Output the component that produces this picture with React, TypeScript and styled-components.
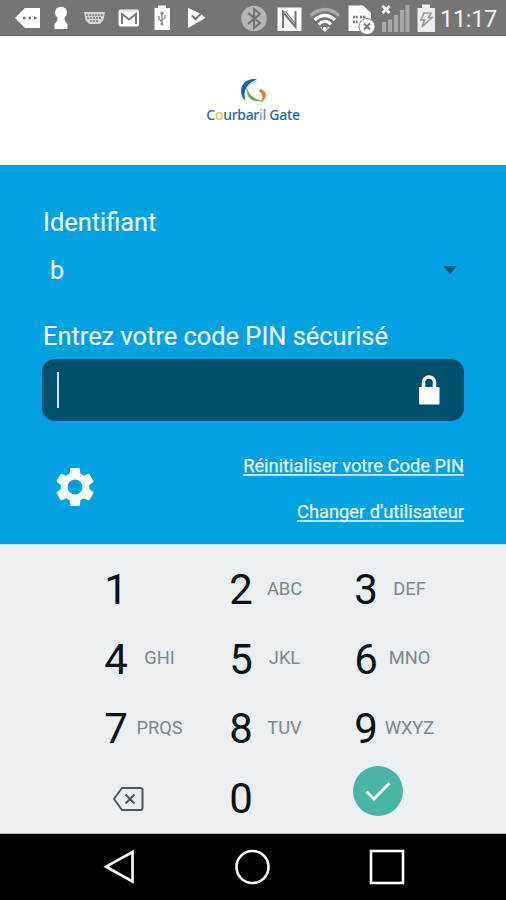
import React from "react";
import styled, { createGlobalStyle } from "styled-components";

const GlobalStyle = createGlobalStyle`
  * { box-sizing: border-box; }
  body { margin: 0; background: #000; font-family: Roboto, "Liberation Sans", sans-serif; }
  svg { display: block; flex: none; }
`;

const Screen = styled.main`
  width: 506px;
  height: 900px;
  display: flex;
  flex-direction: column;
  overflow: hidden;
`;

const StatusBar = styled.header`
  height: 36px;
  flex: none;
  display: flex;
  background: #757575;
  border-bottom: 1px solid #686868;
  color: #f4f4f4;
`;

const StatusSvg = styled.svg<{ $gap: number }>`
  height: 35px;
  margin-left: ${(p) => p.$gap}px;
`;

const Clock = styled.time`
  margin-left: 5px;
  font-size: 23.5px;
  line-height: 38px;
  letter-spacing: -0.3px;
  white-space: nowrap;
`;

const Brand = styled.section`
  height: 129px;
  flex: none;
  background: #fff;
  display: flex;
  flex-direction: column;
  align-items: center;
  padding-top: 42px;
`;

const BrandName = styled.div`
  display: flex;
  font: 500 14px/20px "Noto Sans", sans-serif;
  color: #2168a9;
  letter-spacing: -0.3px;
  white-space: pre;
`;

const BrandLetter = styled.span<{ $color: string }>`
  color: ${(p) => p.$color};
`;

const Login = styled.section`
  height: 379px;
  flex: none;
  background: #00a1e1;
  border-top: 1px solid #1296cd;
  padding: 41px 42px 0 42px;
  display: flex;
  flex-direction: column;
  color: #e9f9ff;
`;

const Label = styled.label`
  margin-left: 1px;
  font-size: 25.4px;
  line-height: 30px;
  -webkit-text-stroke: 0.2px currentColor;
  white-space: nowrap;
`;

const UserSelect = styled.div`
  height: 50px;
  margin: 8px 7px 0 8px;
  display: flex;
  align-items: center;
  justify-content: space-between;
  font-size: 25px;
  -webkit-text-stroke: 0.2px currentColor;
`;

const PinLabel = styled(Label)`
  margin-top: 26px;
`;

const PinField = styled.div`
  height: 62px;
  margin-top: 8px;
  padding: 0 24px 0 15px;
  border-radius: 13px;
  background: #00506d;
  display: flex;
  align-items: center;
  justify-content: space-between;
`;

const Caret = styled.span`
  width: 2px;
  height: 36px;
  background: #d7e6f5;
`;

const Actions = styled.div`
  display: flex;
  justify-content: space-between;
  margin: 33px 0 0 14px;
`;

const GearIcon = styled.svg`
  margin-top: 13px;
`;

const Links = styled.nav`
  display: flex;
  flex-direction: column;
  align-items: flex-end;
  gap: 22px;
`;

const TextLink = styled.a`
  font-size: 18.3px;
  line-height: 24px;
  -webkit-text-stroke: 0.25px currentColor;
  text-decoration: underline;
  text-decoration-color: #b5e2f6;
  text-decoration-skip-ink: none;
  text-decoration-thickness: 2px;
  text-underline-offset: 2px;
  white-space: nowrap;
`;

const Keypad = styled.section`
  height: 290px;
  flex: none;
  background: #eceff1;
  border-top: 1px solid #c5dfea;
  border-bottom: 1px solid #b9bbbb;
  padding: 10px 0 0 104px;
  display: grid;
  grid-template-columns: 125px 125px 125px;
  grid-template-rows: 70px 69px 70px 70px;
`;

const Key = styled.button`
  border: 0;
  padding: 0;
  background: none;
  display: flex;
  align-items: center;
  font-family: inherit;
  color: #071116;
`;

const Digit = styled.span`
  width: 24px;
  font-size: 42px;
  line-height: 70px;
`;

const Letters = styled.span`
  width: 63px;
  text-align: center;
  font-size: 18.3px;
  line-height: 24px;
  margin-bottom: 3px;
  color: #7c868b;
`;

const ConfirmButton = styled(Key)`
  width: 50px;
  height: 50px;
  margin: 2px 0 0 -1px;
  border-radius: 50%;
  background: #4ab5a7;
  justify-content: center;
`;

const NavBar = styled.footer`
  height: 66px;
  flex: none;
  background: #000;
  display: flex;
  align-items: center;
  padding: 0 101px 0 103px;
  justify-content: space-between;
`;

type StatusIconProps = { x: number; w: number; gap: number; children: React.ReactNode };

const StatusIcon = ({ x, w, gap, children }: StatusIconProps) => (
  <StatusSvg $gap={gap} width={w} height={35} viewBox={`${x} 0 ${w} 35`} fill="none">
    {children}
  </StatusSvg>
);

const keys = [
  ["1", ""], ["2", "ABC"], ["3", "DEF"],
  ["4", "GHI"], ["5", "JKL"], ["6", "MNO"],
  ["7", "PRQS"], ["8", "TUV"], ["9", "WXYZ"],
];

const SystemStatus = () => (
  <StatusBar>
    <StatusIcon x={15} w={25} gap={15}>
      <path d="M15 18 25 8H40V28H25Z" fill="#fff" />
      <path d="M23 18h2.5M28.500 18H31M34 18h2.500" stroke="#777" strokeWidth="2.300" />
    </StatusIcon>
    <StatusIcon x={54} w={14} gap={14}>
      <path d="M57.500 17.500A6 6 0 1 1 64.500 17.500C64.500 21 65.500 22 67.500 24V29H54.500V24C56.500 22 57.500 21 57.500 17.500Z" fill="#fff" />
    </StatusIcon>
    <StatusIcon x={84} w={21} gap={16}>
      <path d="M84 12H105L103.500 20 100 24H89L85.500 20Z" fill="#d4d4d4" />
      <path d="M86 15H104M87 18H102M90 21H99" stroke="#777" strokeWidth="1.300" strokeDasharray="2 1" />
    </StatusIcon>
    <StatusIcon x={118} w={22} gap={13}>
      <rect x="118.500" y="9.500" width="20.500" height="17" rx="2" fill="#fff" />
      <path d="M122 24V14L129 19.500 136 14V24" stroke="#777" strokeWidth="2" />
      <path d="M120 11H138" stroke="#bbb" strokeWidth=".7" />
    </StatusIcon>
    <StatusIcon x={154} w={17} gap={14}>
      <path d="M154.500 8H158V5.500H166V8H170V30H154.500Z" fill="#fff" />
      <path d="M162 12V25M159 16V19L162 22M165 15V18L162 20M160.500 14 162 12 163.500 14" stroke="#888" strokeWidth="1.300" />
      <circle cx="162" cy="24" r="1.500" fill="#888" />
    </StatusIcon>
    <StatusIcon x={187} w={19} gap={16}>
      <path d="M188 8V28L205.500 18 201.500 14.500 195.500 20.500 191 16 192.500 14.500 195.500 17.500 199.500 13.500Z" fill="#fff" />
      <path d="M188 8 199.500 13.500 195.500 17.500 192.500 14.500 191 16 188 18Z" fill="#fff" />
    </StatusIcon>
    <StatusIcon x={241} w={27} gap={35}>
      <circle cx="254" cy="18.500" r="12.800" fill="#b5b5b5" />
      <path d="M248 13 260 23 254 28V9L260 14 248 24" stroke="#717171" strokeWidth="2" />
    </StatusIcon>
    <StatusIcon x={277} w={25} gap={9}>
      <rect x="277.500" y="7.500" width="24" height="23.500" fill="#fff" />
      <path d="M283 28V12L295.500 27V11" stroke="#777" strokeWidth="2" />
      <path d="M282 12H286L295.500 24" stroke="#777" strokeWidth="1.200" />
    </StatusIcon>
    <StatusIcon x={309} w={32} gap={7}>
      <path d="M310.500 15.500Q325 3.500 339 15.500" stroke="#ababab" strokeWidth="3.200" />
      <path d="M314.500 20Q325 11 335 20" stroke="#fff" strokeWidth="3.200" />
      <path d="M318.500 24.500Q325 18 331 24.500" stroke="#fff" strokeWidth="3" />
      <path d="M320 27H330L325 32Z" fill="#fff" />
      <path d="M322.500 24V29M327 24V29" stroke="#777" strokeWidth="1" />
    </StatusIcon>
    <StatusIcon x={348} w={27} gap={7}>
      <path d="M348.500 5.500H363L371 13V31H348.500Z" fill="#fff" />
      <path d="M353 17H358M360 17H366M353 22H358M360 22H366" stroke="#777" strokeWidth="2.500" strokeDasharray="2 .8" />
      <circle cx="367" cy="26.500" r="8" fill="#fff" stroke="#818181" />
      <path d="M364 23.500 370 29.500M370 23.500 364 29.500" stroke="#777" strokeWidth="2" />
    </StatusIcon>
    <StatusIcon x={381} w={29} gap={6}>
      <path d="M384 32V22M390 32V19.500M396 32V15M402 32V10M407.500 32V5" stroke="#a7a7a7" strokeWidth="4.200" />
      <path d="M382.500 6 389.500 13M389.500 6 382.500 13" stroke="#fff" strokeWidth="2.500" />
    </StatusIcon>
    <StatusIcon x={417} w={18} gap={7}>
      <path d="M417.500 8H422V4.500H430V8H435V32H417.500Z" fill="#eee" />
      <path d="M424 13H431L428.500 17.500H432L422 27 424.500 20H421Z" stroke="#999" strokeWidth="1.700" />
    </StatusIcon>
    <Clock>11:17</Clock>
  </StatusBar>
);

export default function App() {
  return (
    <>
      <GlobalStyle />
      <Screen>
        <SystemStatus />
        <Brand>
          <svg width="27" height="27" viewBox="240 78 27 27" fill="none">
            <path d="M257 79.300C248 77.500 241 83.500 241 91C241 95.500 242.800 98.500 245.500 100.500C243 93 245 84 257 79.300Z" fill="#1464ae" />
            <path d="M257 81.500C251 82.500 247 86 246 90.500" stroke="#9ccbe6" strokeWidth="1" />
            <path d="M247.200 89.500C246.500 97.500 252.500 102.500 260.500 100.500C254 99 249.500 95.500 247.200 89.500Z" fill="#66ae38" stroke="#66ae38" strokeWidth=".5" />
            <path d="M260 89.500C267 90 268 98.500 260.500 102.300C263.500 98.500 263.500 93.500 259.500 91.800Z" fill="#ef7c24" stroke="#ef7c24" strokeWidth=".5" />
          </svg>
          <BrandName>
            <span>C</span><BrandLetter $color="#e3c342">o</BrandLetter><span>urbar</span>
            <BrandLetter $color="#8fa9c0">i</BrandLetter><BrandLetter $color="#6688a8">l</BrandLetter><span> Gate</span>
          </BrandName>
        </Brand>
        <Login>
          <Label>Identifiant</Label>
          <UserSelect>
            <span>b</span>
            <svg width="14" height="8" viewBox="0 0 14 8"><path d="M0 0H14L7 8Z" fill="#075675" /></svg>
          </UserSelect>
          <PinLabel>Entrez votre code PIN sécurisé</PinLabel>
          <PinField>
            <Caret />
            <svg width="22" height="30" viewBox="0 0 22 30">
              <path d="M5.500 13V7.500A5.500 5.500 0 0 1 16.500 7.500V13" fill="none" stroke="#fff" strokeWidth="3.500" />
              <rect x="1" y="12" width="20.500" height="17.500" rx="1" fill="#fff" />
            </svg>
          </PinField>
          <Actions>
            <GearIcon width="38" height="40" viewBox="2 1.600 20 20.800">
              <path fill="#fff" d="M19.430 12.980c.04-.32.07-.64.07-.98s-.03-.66-.07-.98l2.110-1.650a.5.5 0 0 0 .12-.64l-2-3.460a.5.5 0 0 0-.61-.22l-2.490 1a7.300 7.300 0 0 0-1.690-.98l-.38-2.650A.5.5 0 0 0 14 2h-4a.5.5 0 0 0-.49.420l-.38 2.650c-.61.25-1.170.59-1.690.98l-2.490-1a.5.5 0 0 0-.61.220l-2 3.460a.5.5 0 0 0 .12.640l2.110 1.650a8 8 0 0 0 0 1.960l-2.110 1.650a.5.5 0 0 0-.12.640l2 3.460c.12.220.39.300.61.220l2.490-1c.52.400 1.080.730 1.690.980l.38 2.650c.03.240.24.420.49.420h4c.25 0 .46-.18.490-.42l.38-2.650c.61-.25 1.170-.59 1.690-.98l2.490 1c.23.090.49 0 .61-.22l2-3.460a.5.5 0 0 0-.12-.64zM12 15.900a3.900 3.900 0 1 1 0-7.800 3.900 3.900 0 0 1 0 7.800Z" />
            </GearIcon>
            <Links>
              <TextLink>Réinitialiser votre Code PIN</TextLink>
              <TextLink>Changer d'utilisateur</TextLink>
            </Links>
          </Actions>
        </Login>
        <Keypad>
          {keys.map(([digit, letters]) => (
            <Key key={digit}><Digit>{digit}</Digit><Letters>{letters}</Letters></Key>
          ))}
          <Key aria-label="Effacer">
            <svg width="42" height="26" viewBox="104 786 42 26" fill="none" stroke="#3f5b68" strokeWidth="2">
              <path d="M122 788H140.500Q142.500 788 142.500 790V808Q142.500 810 140.500 810H122L114 799Z" strokeLinejoin="round" />
              <path d="M125.500 794.500 134.500 803.500M134.500 794.500 125.500 803.500" />
            </svg>
          </Key>
          <Key><Digit>0</Digit></Key>
          <ConfirmButton aria-label="Valider">
            <svg width="26" height="20" viewBox="0 0 26 20" fill="none" stroke="#fff" strokeWidth="2.700"><path d="M1.500 10.500 9 18 24.500 2" /></svg>
          </ConfirmButton>
        </Keypad>
        <NavBar>
          <svg width="32" height="36" viewBox="0 0 32 36" fill="none" stroke="#fff" strokeWidth="2.600"><path d="M29.500 3V32.500L3 17.700Z" /></svg>
          <svg width="36" height="36" viewBox="0 0 36 36" fill="none" stroke="#fff" strokeWidth="2.600"><circle cx="18.500" cy="18" r="16" /></svg>
          <svg width="36" height="36" viewBox="0 0 36 36" fill="none" stroke="#fff" strokeWidth="2.600"><rect x="2" y="2" width="32" height="32" /></svg>
        </NavBar>
      </Screen>
    </>
  );
}
